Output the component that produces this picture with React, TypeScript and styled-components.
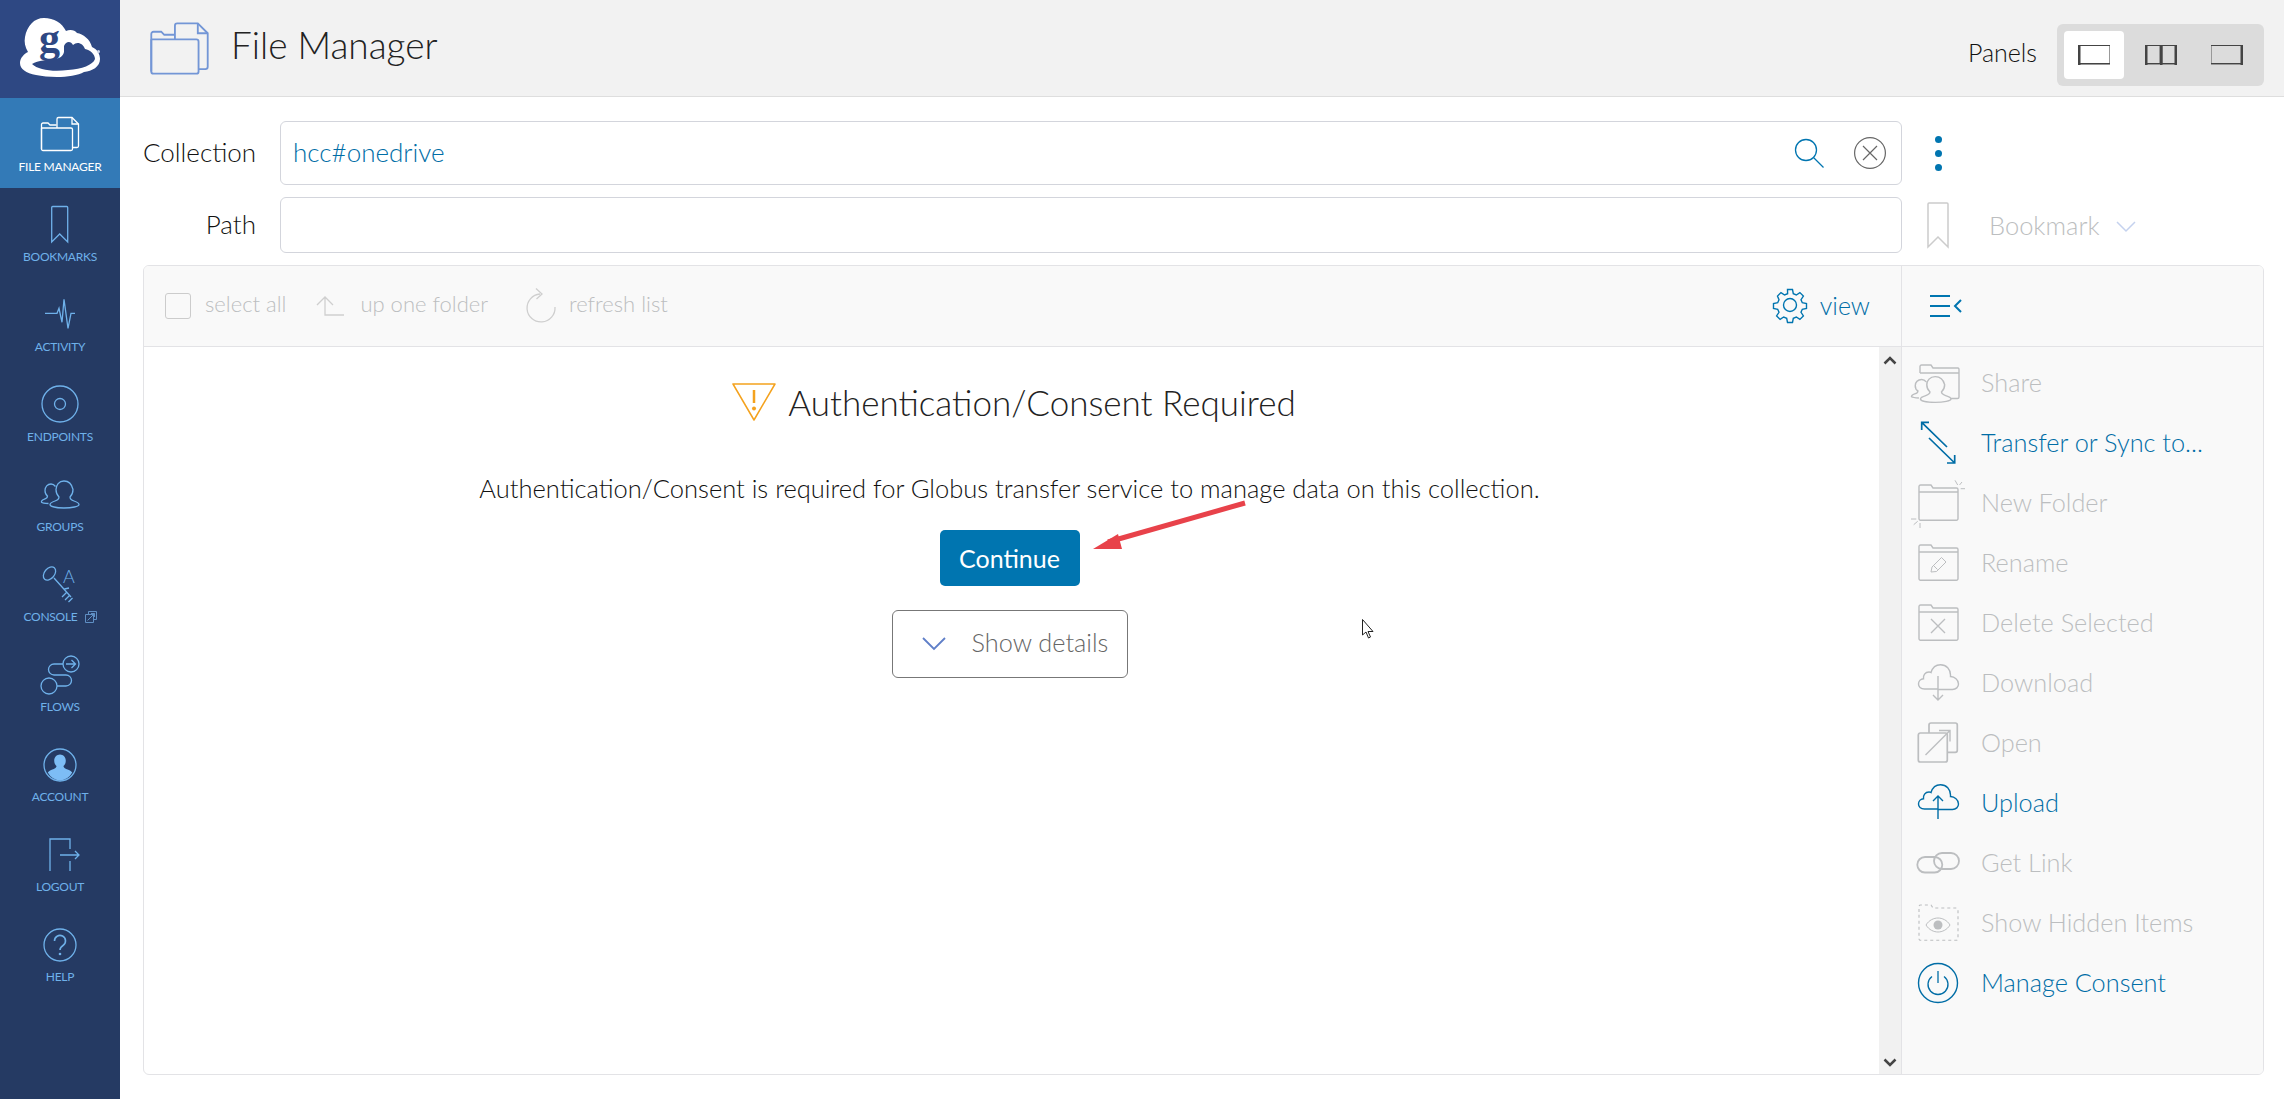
import React from "react";
import styled, { createGlobalStyle } from "styled-components";

const FONT = `Lato, "Open Sans", "Liberation Sans", sans-serif`;
const BLUE = "#0075b0";
const BLUE_TEXT = "#006da6";
const MUTED = "#bcbec0";
const NAV = "#6fb1ea";

const Global = createGlobalStyle`
  html, body { margin: 0; padding: 0; background: #fff; height: 100%; }
  #root { height: 100%; }
  * { box-sizing: border-box; }
  svg { display: block; overflow: visible; }
`;

const Page = styled.div`
  position: relative;
  display: flex;
  width: 100%;
  height: 100vh;
  overflow: hidden;
  font-family: ${FONT};
  font-weight: 300;
  color: #111;
`;

const Sidebar = styled.nav`
  width: 120px;
  flex: none;
  display: flex;
  flex-direction: column;
  background: #253a63;
`;

const LogoBox = styled.div`
  height: 98px;
  background: #2e4883;
`;

const NavItem = styled.a<{ $active?: boolean }>`
  height: 90px;
  padding-top: 16px;
  display: flex;
  flex-direction: column;
  align-items: center;
  gap: 5px;
  background: ${(p) => (p.$active ? "#337ab7" : "transparent")};
  color: ${(p) => (p.$active ? "#fff" : NAV)};
  font-size: 12px;
  line-height: 16px;
  font-weight: 400;
  letter-spacing: -0.25px;
  white-space: nowrap;
`;

const NavLabel = styled.span`
  display: flex;
  align-items: center;
  gap: 7px;
`;

const NavIcon = styled.svg.attrs({ viewBox: "0 0 40 40", fill: "none", stroke: "currentColor" })`
  width: 40px;
  height: 40px;
  stroke-width: 1.3;
  flex: none;
`;

const Main = styled.main`
  flex: 1;
  min-width: 0;
  display: flex;
  flex-direction: column;
`;

const Header = styled.header`
  height: 97px;
  flex: none;
  display: flex;
  align-items: center;
  padding: 0 20px 0 29px;
  background: #f2f2f2;
  border-bottom: 1px solid #dedede;
`;

const HeaderIcon = styled.svg.attrs({ viewBox: "0 0 40 40", fill: "none", stroke: "#7396d6" })`
  width: 61px;
  height: 61px;
  stroke-width: 1.2;
  margin-right: 21px;
`;

const Title = styled.h1`
  margin: 0 0 8px;
  font-size: 37px;
  font-weight: 300;
  color: #222;
  flex: 1;
`;

const PanelsLabel = styled.span`
  font-size: 25px;
  margin-right: 20px;
  margin-top: 8px;
  color: #111;
`;

const PanelSwitch = styled.div`
  display: flex;
  gap: 6.5px;
  padding: 7px;
  margin-top: 14px;
  background: #dcdcdc;
  border-radius: 6px;
`;

const PanelButton = styled.div<{ $active?: boolean }>`
  width: 60px;
  height: 48px;
  display: flex;
  align-items: center;
  justify-content: center;
  border-radius: 4px;
  background: ${(p) => (p.$active ? "#fff" : "transparent")};
`;

const Form = styled.div`
  flex: 1;
  min-height: 0;
  display: flex;
  flex-direction: column;
  gap: 12px;
  padding: 24px 20px 24px 23px;
`;

const FieldRow = styled.div`
  display: flex;
  align-items: center;
`;

const FieldLabel = styled.label`
  width: 113px;
  margin-right: 24px;
  text-align: right;
  white-space: nowrap;
  font-size: 26px;
  color: #111;
  margin-bottom: 3px;
`;

const InputBox = styled.div<{ $h: number }>`
  flex: 1;
  height: ${(p) => p.$h}px;
  display: flex;
  align-items: center;
  padding: 0 15px 0 12px;
  border: 1px solid #d3d5dc;
  border-radius: 6px;
`;

const InputValue = styled.span`
  flex: 1;
  font-size: 26px;
  color: ${BLUE_TEXT};
  margin-bottom: 3px;
`;

const RowSide = styled.div`
  width: 362px;
  flex: none;
  display: flex;
  align-items: center;
`;

const Dots = styled.div`
  margin-left: 33px;
  display: flex;
  flex-direction: column;
  gap: 7px;
`;

const Dot = styled.i`
  display: block;
  width: 7px;
  height: 7px;
  border-radius: 50%;
  background: ${BLUE};
`;

const BookmarkText = styled.span`
  margin-left: 40px;
  font-size: 25.5px;
  color: ${MUTED};
`;

const Panel = styled.section`
  flex: 1;
  min-height: 0;
  display: grid;
  grid-template-columns: 1fr 362px;
  border: 1px solid #e3e3e6;
  border-radius: 6px;
  overflow: hidden;
`;

const LeftCol = styled.div`
  display: flex;
  flex-direction: column;
  min-height: 0;
`;

const Toolbar = styled.div`
  height: 81px;
  flex: none;
  display: flex;
  align-items: center;
  background: #f9f9f9;
  border-bottom: 1px solid #e3e3e6;
`;

const LeftToolbar = styled(Toolbar)`
  padding: 0 31px 0 21px;
`;

const Check = styled.span`
  width: 26px;
  height: 26px;
  border: 1.5px solid #ccc;
  border-radius: 3px;
  margin-right: 14px;
`;

const ToolText = styled.span<{ $gap?: number }>`
  font-size: 22px;
  color: ${MUTED};
  margin-right: ${(p) => p.$gap ?? 0}px;
  margin-bottom: 5px;
`;

const ToolSvg = styled.svg.attrs({ fill: "none", stroke: "#cfcfcf" })<{ $gap: number }>`
  stroke-width: 1.3;
  margin-right: ${(p) => p.$gap}px;
  flex: none;
`;

const ViewGroup = styled.div`
  margin-left: auto;
  display: flex;
  align-items: center;
  gap: 13px;
  color: ${BLUE_TEXT};
  font-size: 25px;
  margin-bottom: 3px;
`;

const Body = styled.div`
  flex: 1;
  min-height: 0;
  display: flex;
`;

const Content = styled.div`
  flex: 1;
  padding: 35px 4px 0 0;
  display: flex;
  flex-direction: column;
  align-items: center;
`;

const HeadingRow = styled.div`
  height: 44px;
  margin-left: 7px;
  display: flex;
  align-items: center;
  gap: 12px;
`;

const WarningIcon = styled.svg.attrs({ viewBox: "0 0 44 38", fill: "none", stroke: "#f4a21e" })`
  width: 44px;
  height: 38px;
  stroke-width: 1.5;
  margin: 0 0 5px 2px;
`;

const Heading = styled.h2`
  margin: 0 0 5px;
  font-size: 35px;
  line-height: 44px;
  font-weight: 300;
  color: #222;
`;

const Message = styled.p`
  margin: 47px 0 0;
  font-size: 25.5px;
  line-height: 30px;
  color: #111;
`;

const PrimaryButton = styled.button`
  margin-top: 27px;
  width: 140px;
  height: 56px;
  border: 0;
  border-radius: 5px;
  background: ${BLUE};
  color: #fff;
  font-family: inherit;
  font-size: 25px;
  font-weight: 400;
`;

const DetailsButton = styled.button`
  margin-top: 24px;
  width: 236px;
  height: 68px;
  display: flex;
  align-items: center;
  padding: 0 14px 0 29px;
  gap: 26px;
  background: #fff;
  border: 1px solid #777;
  border-radius: 6px;
  color: #666;
  font-family: inherit;
  font-size: 25.3px;
  font-weight: 300;
  white-space: nowrap;
`;

const DetailsText = styled.span`
  margin-bottom: 4px;
`;

const ScrollTrack = styled.div`
  width: 22px;
  flex: none;
  display: flex;
  flex-direction: column;
  justify-content: space-between;
  align-items: center;
  padding: 9px 0 7px;
  background: #f1f1f1;
`;

const RightCol = styled.aside`
  background: #f9f9f9;
  border-left: 1px solid #e3e3e6;
  display: flex;
  flex-direction: column;
`;

const MenuToolbar = styled(Toolbar)`
  padding: 0 0 1px 28px;
`;

const Menu = styled.div`
  padding: 6px 0 0 14px;
  display: flex;
  flex-direction: column;
`;

const MenuRow = styled.div<{ $on?: boolean }>`
  height: 60px;
  display: flex;
  align-items: center;
  gap: 21px;
  font-size: 25.3px;
  color: ${(p) => (p.$on ? BLUE_TEXT : MUTED)};
`;

const MenuLabel = styled.span`
  margin-bottom: 2px;
`;

const MenuIcon = styled.svg.attrs({ viewBox: "0 0 44 44", fill: "none", stroke: "currentColor" })`
  width: 44px;
  height: 44px;
  stroke-width: 1.4;
  flex: none;
`;

const Overlay = styled.svg.attrs({ viewBox: "0 0 2284 1099" })`
  position: absolute;
  inset: 0;
  width: 2284px;
  height: 1099px;
  pointer-events: none;
`;

const folderDoc = (
  <>
    <path d="M1.5 35V10.5A1.5 1.5 0 0 1 3 9h5l2 2h6.5" />
    <path d="M1.5 14H31a1.5 1.5 0 0 1 1.5 1.5V35a1.5 1.5 0 0 1-1.5 1.5H3A1.5 1.5 0 0 1 1.5 35V14" />
    <path d="M17 14V5a1.5 1.5 0 0 1 1.5-1.5H32L38.5 10v22a1.5 1.5 0 0 1-1.5 1.5h-4.5" />
    <path d="M32 3.5V10h6.5" />
  </>
);

const bigPerson =
  "M24 7c-5 0-8 4-8 8.5 0 3 1.5 6 3 7.5 0 2-1 3-4 4-3 1-5 2-5 3.5 0 2 6 3.5 14 3.5s15-1.5 15-3.5c0-1.5-2-2.5-5-3.5-3-1-4-2-4-4 1.5-1.5 3-4.5 3-7.5C32 11 29 7 24 7Z";
const smallPerson =
  "M15.5 12.5c-1.2-1.6-2.800-2.500-4.500-2.500-3.500 0-6 2.800-6 6.500 0 2.500 1 4.500 2.500 5.500 0 2-1 2.500-3 3.200-2 .7-3.500 1.800-3 3 1 .8 3.500 1.100 7 1.300";

const navItems: { label: string; active?: boolean; ext?: boolean; icon: React.ReactNode }[] = [
  { label: "FILE MANAGER", active: true, icon: folderDoc },
  { label: "BOOKMARKS", icon: <path d="M11.700 3.500a1 1 0 0 1 1-1h14a1 1 0 0 1 1 1V38l-8-8-8 8Z" /> },
  { label: "ACTIVITY", icon: <path d="M5 19.300h12l2-5 3 14 2-23 4 29 3-15h4" /> },
  {
    label: "ENDPOINTS",
    icon: (
      <>
        <circle cx="20" cy="20" r="18" />
        <circle cx="20" cy="20" r="5.500" />
      </>
    ),
  },
  {
    label: "GROUPS",
    icon: (
      <>
        <path d={bigPerson} />
        <path d={smallPerson} />
      </>
    ),
  },
  {
    label: "CONSOLE",
    ext: true,
    icon: (
      <>
        <ellipse cx="9.500" cy="9.500" rx="5" ry="7.500" transform="rotate(40 9.500 9.500)" />
        <path d="M14 14l17 19M27 28l-5 5M30 31l-5 5M32.500 34l-4 4M24.500 25l4.500-1" />
        <text x="23" y="19" fontSize="18" fill="currentColor" stroke="none" fontFamily="Lato, sans-serif" fontWeight="300">A</text>
      </>
    ),
  },
  {
    label: "FLOWS",
    icon: (
      <>
        <circle cx="31" cy="10" r="8" />
        <circle cx="9" cy="32" r="8" />
        <path d="M23 10h-9a5.500 5.500 0 0 0 0 11h12a5.500 5.500 0 0 1 0 11h-9" />
        <path d="M26 10h9M31.500 6l4 4-4 4" />
      </>
    ),
  },
  {
    label: "ACCOUNT",
    icon: (
      <>
        <circle cx="20" cy="21" r="16" />
        <path
          fill="#7dbdf5"
          stroke="none"
          d="M20 10.500c3.300 0 5.800 2.800 5.800 6.300 0 2.300-1 4.200-2.300 5.300 0 1.300.6 2 2.700 2.800 3 1 5 2 6 3.600A15.500 15.500 0 0 1 20 36.500 15.500 15.500 0 0 1 7.800 28.500c1-1.600 3-2.600 6-3.600 2.100-.8 2.700-1.500 2.700-2.800-1.300-1.100-2.300-3-2.300-5.300 0-3.500 2.500-6.300 5.800-6.300Z"
        />
      </>
    ),
  },
  { label: "LOGOUT", icon: <path d="M10 37V5h20v10M30 27v10M20 21h19M35 17l4 4-4 4" /> },
  {
    label: "HELP",
    icon: (
      <>
        <circle cx="20" cy="21" r="16" />
        <path strokeWidth="1.600" d="M14.500 17a5.500 5.500 0 1 1 8.500 4.500c-2 1.300-3 2.300-3 4.500" />
        <circle cx="20" cy="30" r="1.300" fill="currentColor" stroke="none" />
      </>
    ),
  },
];

const folder =
  "M3 11V5.500A1.500 1.500 0 0 1 4.500 4h10.500l2 3h23.500A1.500 1.500 0 0 1 42 8.500V37.800a1.500 1.500 0 0 1-1.500 1.500h-36A1.500 1.500 0 0 1 3 37.800V11H42";
const cloud =
  "M22 28H8.500C4.500 28 2.500 25.500 2.500 23c0-3 2.500-5 5-5.200C7 14.500 9 11 13 11c.8 0 1.600.2 2 .5C16.500 6.500 20 3.700 24.500 3.700c6 0 10 4.500 10 10.300v1.500c4 .3 8 3 8 7.500 0 3-2.500 5.500-6 5.500H22";

const menuItems: { label: string; on?: boolean; icon: React.ReactNode }[] = [
  {
    label: "Share",
    icon: (
      <>
        <path d="M4 12V5.500A1.500 1.500 0 0 1 5.500 4H15l2 3h25A1.500 1.500 0 0 1 43 8.500V36a1.500 1.500 0 0 1-1.500 1.500H35M4 12H43" />
        <g transform="translate(-6 9) scale(1.05 .95)" fill="#f9f9f9">
          <path d={smallPerson} />
          <path d={bigPerson} />
        </g>
      </>
    ),
  },
  {
    label: "Transfer or Sync to...",
    on: true,
    icon: <path strokeWidth="1.700" d="M5.700 1.300 31 26M5.700 9V1.300H13M13 17l25.700 25M38.700 34v8H31" />,
  },
  {
    label: "New Folder",
    icon: (
      <>
        <path d={folder} />
        <path strokeWidth="1" d="M39-.7l2.700 4.700M49 7.700h-4.300M-5 38H.3M-2.300 43.700l4-3.400M4 47v-5M46 1l-2.500 3" />
      </>
    ),
  },
  {
    label: "Rename",
    icon: (
      <>
        <path d={folder} />
        <path strokeWidth="1" d="M15 31l1-5 9.500-9.500 4.500 4.500-9.500 9.500ZM17.500 24.500l4 4" />
      </>
    ),
  },
  {
    label: "Delete Selected",
    icon: (
      <>
        <path d={folder} />
        <path d="M15 18l14 14M29 18 15 32" />
      </>
    ),
  },
  {
    label: "Download",
    icon: (
      <>
        <path d={cloud} />
        <path d="M22 15v24M17 34l5 5 5-5" />
      </>
    ),
  },
  {
    label: "Open",
    icon: (
      <>
        <path strokeWidth="1.700" d="M13 12V4a2 2 0 0 1 2-2h24.300a2 2 0 0 1 2 2v25.300a2 2 0 0 1-2 2h-8" />
        <path strokeWidth="1.700" d="M4.300 12h25a2 2 0 0 1 2 2v25a2 2 0 0 1-2 2h-25a2 2 0 0 1-2-2V14a2 2 0 0 1 2-2Z" />
        <path d="M9.500 34 34 9.500M23 9.500h11v11" />
      </>
    ),
  },
  {
    label: "Upload",
    on: true,
    icon: (
      <>
        <path d={cloud} />
        <path d="M22 15v23M17 20l5-5 5 5" />
      </>
    ),
  },
  {
    label: "Get Link",
    icon: (
      <>
        <rect x="1.300" y="16" width="25" height="15.500" rx="7.700" strokeWidth="1.800" />
        <rect x="18" y="12" width="25" height="16" rx="8" strokeWidth="1.800" />
      </>
    ),
  },
  {
    label: "Show Hidden Items",
    icon: (
      <>
        <path strokeWidth="1.100" strokeDasharray="3 3" d={folder.replace("V11H42", "V11")} />
        <path strokeWidth="1" d="M10 24c3-5 8-7 12-7s9 2 12 7c-3 5-8 7-12 7s-9-2-12-7Z" />
        <circle cx="22" cy="24" r="4.500" fill="currentColor" stroke="none" />
      </>
    ),
  },
  {
    label: "Manage Consent",
    on: true,
    icon: (
      <>
        <circle cx="22" cy="22" r="19.500" />
        <path d="M16 15.500a10 10 0 1 0 12 0M22 10v12" strokeWidth="1.300" />
      </>
    ),
  },
];

function Logo() {
  return (
    <svg width="120" height="98" viewBox="0 0 120 98">
      <path
        fill="#fff"
        d="M44 18C54 18 62 23 66 31C70 29 75 30 77 33C83 34 90 39 92 47C97 49 100 54 100 59C100 67 92 71 84 72C74 78 50 78 36 75C26 73 20 69 20 63C20 58 24 54 28 52C25 47 24 42 25 37C27 26 34 18 44 18Z"
      />
      <path
        fill="#2e4883"
        d="M64 46C66 41 71 41 73 45C77 41 83 43 85 49C90 50 95 54 95 59C93 65 82 69 68 70C53 72 38 70 32 64C38 60 48 60 56 59C60 58 63 56 64 52Z"
      />
      <text x="39" y="52" fontFamily="'Liberation Serif', serif" fontWeight="700" fontSize="42" fill="#2e4883">g</text>
      <circle cx="98.500" cy="51.500" r="1.500" fill="#cdd6e8" />
    </svg>
  );
}

function PanelGlyph({ bars, split }: { bars: number[]; split?: boolean }) {
  return (
    <svg width="32" height="20" viewBox="0 0 32 20" fill="none" stroke="#999" strokeWidth="1">
      {split ? (
        <>
          <rect x=".5" y=".5" width="14" height="19" />
          <rect x="17.500" y=".5" width="14" height="19" />
        </>
      ) : (
        <rect x=".5" y=".5" width="31" height="19" />
      )}
      {bars.map((x) => (
        <rect key={x} x={x} y="0" width="2.500" height="20" fill="#444" stroke="none" />
      ))}
      <path stroke="#444" d={split ? "M0 .5h15M0 18.500h15M17 .5h15M17 18.500h15" : "M0 .5h32M0 18.500h32"} />
    </svg>
  );
}

export default function App() {
  return (
    <Page>
      <Global />
      <Sidebar>
        <LogoBox>
          <Logo />
        </LogoBox>
        {navItems.map((n) => (
          <NavItem key={n.label} $active={n.active}>
            <NavIcon>{n.icon}</NavIcon>
            <NavLabel>
              {n.label}
              {n.ext && (
                <svg width="12" height="12" viewBox="0 0 12 12" fill="none" stroke="#5f8fc4" strokeWidth="1">
                  <path d="M3.500 3.500V.5h8v8h-3M.5 3.500h8v8h-8ZM2.500 9.500l7-7M6 2.500h3.500V6" />
                </svg>
              )}
            </NavLabel>
          </NavItem>
        ))}
      </Sidebar>
      <Main>
        <Header>
          <HeaderIcon>{folderDoc}</HeaderIcon>
          <Title>File Manager</Title>
          <PanelsLabel>Panels</PanelsLabel>
          <PanelSwitch>
            <PanelButton $active>
              <PanelGlyph bars={[0]} />
            </PanelButton>
            <PanelButton>
              <PanelGlyph bars={[0, 15, 29.500]} split />
            </PanelButton>
            <PanelButton>
              <PanelGlyph bars={[29.500]} />
            </PanelButton>
          </PanelSwitch>
        </Header>
        <Form>
          <FieldRow>
            <FieldLabel>Collection</FieldLabel>
            <InputBox $h={64}>
              <InputValue>hcc#onedrive</InputValue>
              <svg width="30" height="30" viewBox="0 0 30 30" fill="none" stroke={BLUE} strokeWidth="1.300">
                <circle cx="12" cy="12" r="10.500" />
                <path d="M19.500 19.500 29.500 29.500" />
              </svg>
              <svg width="32" height="32" viewBox="0 0 32 32" fill="none" stroke="#666" strokeWidth="1.200" style={{ marginLeft: 30 }}>
                <circle cx="16" cy="16" r="15.400" />
                <path d="M9 9l14 14M23 9 9 23" />
              </svg>
            </InputBox>
            <RowSide>
              <Dots>
                <Dot />
                <Dot />
                <Dot />
              </Dots>
            </RowSide>
          </FieldRow>
          <FieldRow>
            <FieldLabel>Path</FieldLabel>
            <InputBox $h={56} />
            <RowSide>
              <svg width="22" height="46" viewBox="0 0 22 46" fill="none" stroke="#ccc" strokeWidth="1.500" style={{ marginLeft: 25 }}>
                <path d="M1 2a1 1 0 0 1 1-1h18a1 1 0 0 1 1 1v43l-10-10L1 45Z" />
              </svg>
              <BookmarkText>Bookmark</BookmarkText>
              <svg width="20" height="12" viewBox="0 0 20 12" fill="none" stroke="#c5d2ee" strokeWidth="1.500" style={{ marginLeft: 16, marginTop: 4 }}>
                <path d="M1 1l9 9 9-9" />
              </svg>
            </RowSide>
          </FieldRow>
          <Panel>
            <LeftCol>
              <LeftToolbar>
                <Check />
                <ToolText $gap={30}>select all</ToolText>
                <ToolSvg width="28" height="20" viewBox="0 0 28 20" $gap={16}>
                  <path d="M1 9l8-8 8 8M9 1v18h19" />
                </ToolSvg>
                <ToolText $gap={38}>up one folder</ToolText>
                <ToolSvg width="30" height="36" viewBox="0 0 30 36" $gap={13}>
                  <path d="M14 6A14 14 0 1 0 29 19M10 .5l6 5.500-5.500 5" />
                </ToolSvg>
                <ToolText>refresh list</ToolText>
                <ViewGroup>
                  <svg width="34" height="34" viewBox="0 0 34 34" fill="none" stroke={BLUE} strokeWidth="1.400">
                    <circle cx="17" cy="17" r="6.500" />
                    <path d="M14.500 1.500h5l.8 4.200 3 1.300 3.600-2.400 3.500 3.500-2.400 3.600 1.300 3 4.200.8v5l-4.200.8-1.300 3 2.400 3.600-3.500 3.500-3.600-2.400-3 1.300-.8 4.200h-5l-.8-4.200-3-1.300-3.600 2.400-3.500-3.500 2.400-3.600-1.300-3-4.200-.8v-5l4.200-.8 1.300-3L4.500 8.100 8 4.600l3.600 2.400 3-1.300Z" />
                  </svg>
                  view
                </ViewGroup>
              </LeftToolbar>
              <Body>
                <Content>
                  <HeadingRow>
                    <WarningIcon>
                      <path d="M1 1h42L22 37Z" strokeLinejoin="round" />
                      <path d="M22 7v13" strokeWidth="2.500" />
                      <circle cx="22" cy="25.500" r="2" fill="#f4a21e" stroke="none" />
                    </WarningIcon>
                    <Heading>Authentication/Consent Required</Heading>
                  </HeadingRow>
                  <Message>Authentication/Consent is required for Globus transfer service to manage data on this collection.</Message>
                  <PrimaryButton>Continue</PrimaryButton>
                  <DetailsButton>
                    <svg width="24" height="14" viewBox="0 0 24 14" fill="none" stroke="#5f7fc8" strokeWidth="1.800">
                      <path d="M1 1l11 11L23 1" />
                    </svg>
                    <DetailsText>Show details</DetailsText>
                  </DetailsButton>
                </Content>
                <ScrollTrack>
                  <svg width="14" height="9" viewBox="0 0 14 9" fill="none" stroke="#444" strokeWidth="2.500">
                    <path d="M1.500 7.500 7 2l5.500 5.500" />
                  </svg>
                  <svg width="14" height="9" viewBox="0 0 14 9" fill="none" stroke="#444" strokeWidth="2.500">
                    <path d="M1.500 1.500 7 7l5.500-5.500" />
                  </svg>
                </ScrollTrack>
              </Body>
            </LeftCol>
            <RightCol>
              <MenuToolbar>
                <svg width="33" height="22" viewBox="0 0 33 22" fill="none" stroke={BLUE} strokeWidth="2">
                  <path d="M0 1h20M0 11h20M0 21h20M31 5l-6 6 6 6" strokeWidth="2" />
                </svg>
              </MenuToolbar>
              <Menu>
                {menuItems.map((m) => (
                  <MenuRow key={m.label} $on={m.on}>
                    <MenuIcon>{m.icon}</MenuIcon>
                    <MenuLabel>{m.label}</MenuLabel>
                  </MenuRow>
                ))}
              </Menu>
            </RightCol>
          </Panel>
        </Form>
      </Main>
      <Overlay>
        <path d="M1245 503 1108 542" stroke="#e8424a" strokeWidth="5" fill="none" />
        <path d="M1093 549 1118 534 1122 549Z" fill="#e8424a" />
        <path d="M1362.500 619.500V635l3.500-3 2.500 6 2-1-2.500-5.500h5Z" fill="#fff" stroke="#222" strokeWidth="1" />
      </Overlay>
    </Page>
  );
}
